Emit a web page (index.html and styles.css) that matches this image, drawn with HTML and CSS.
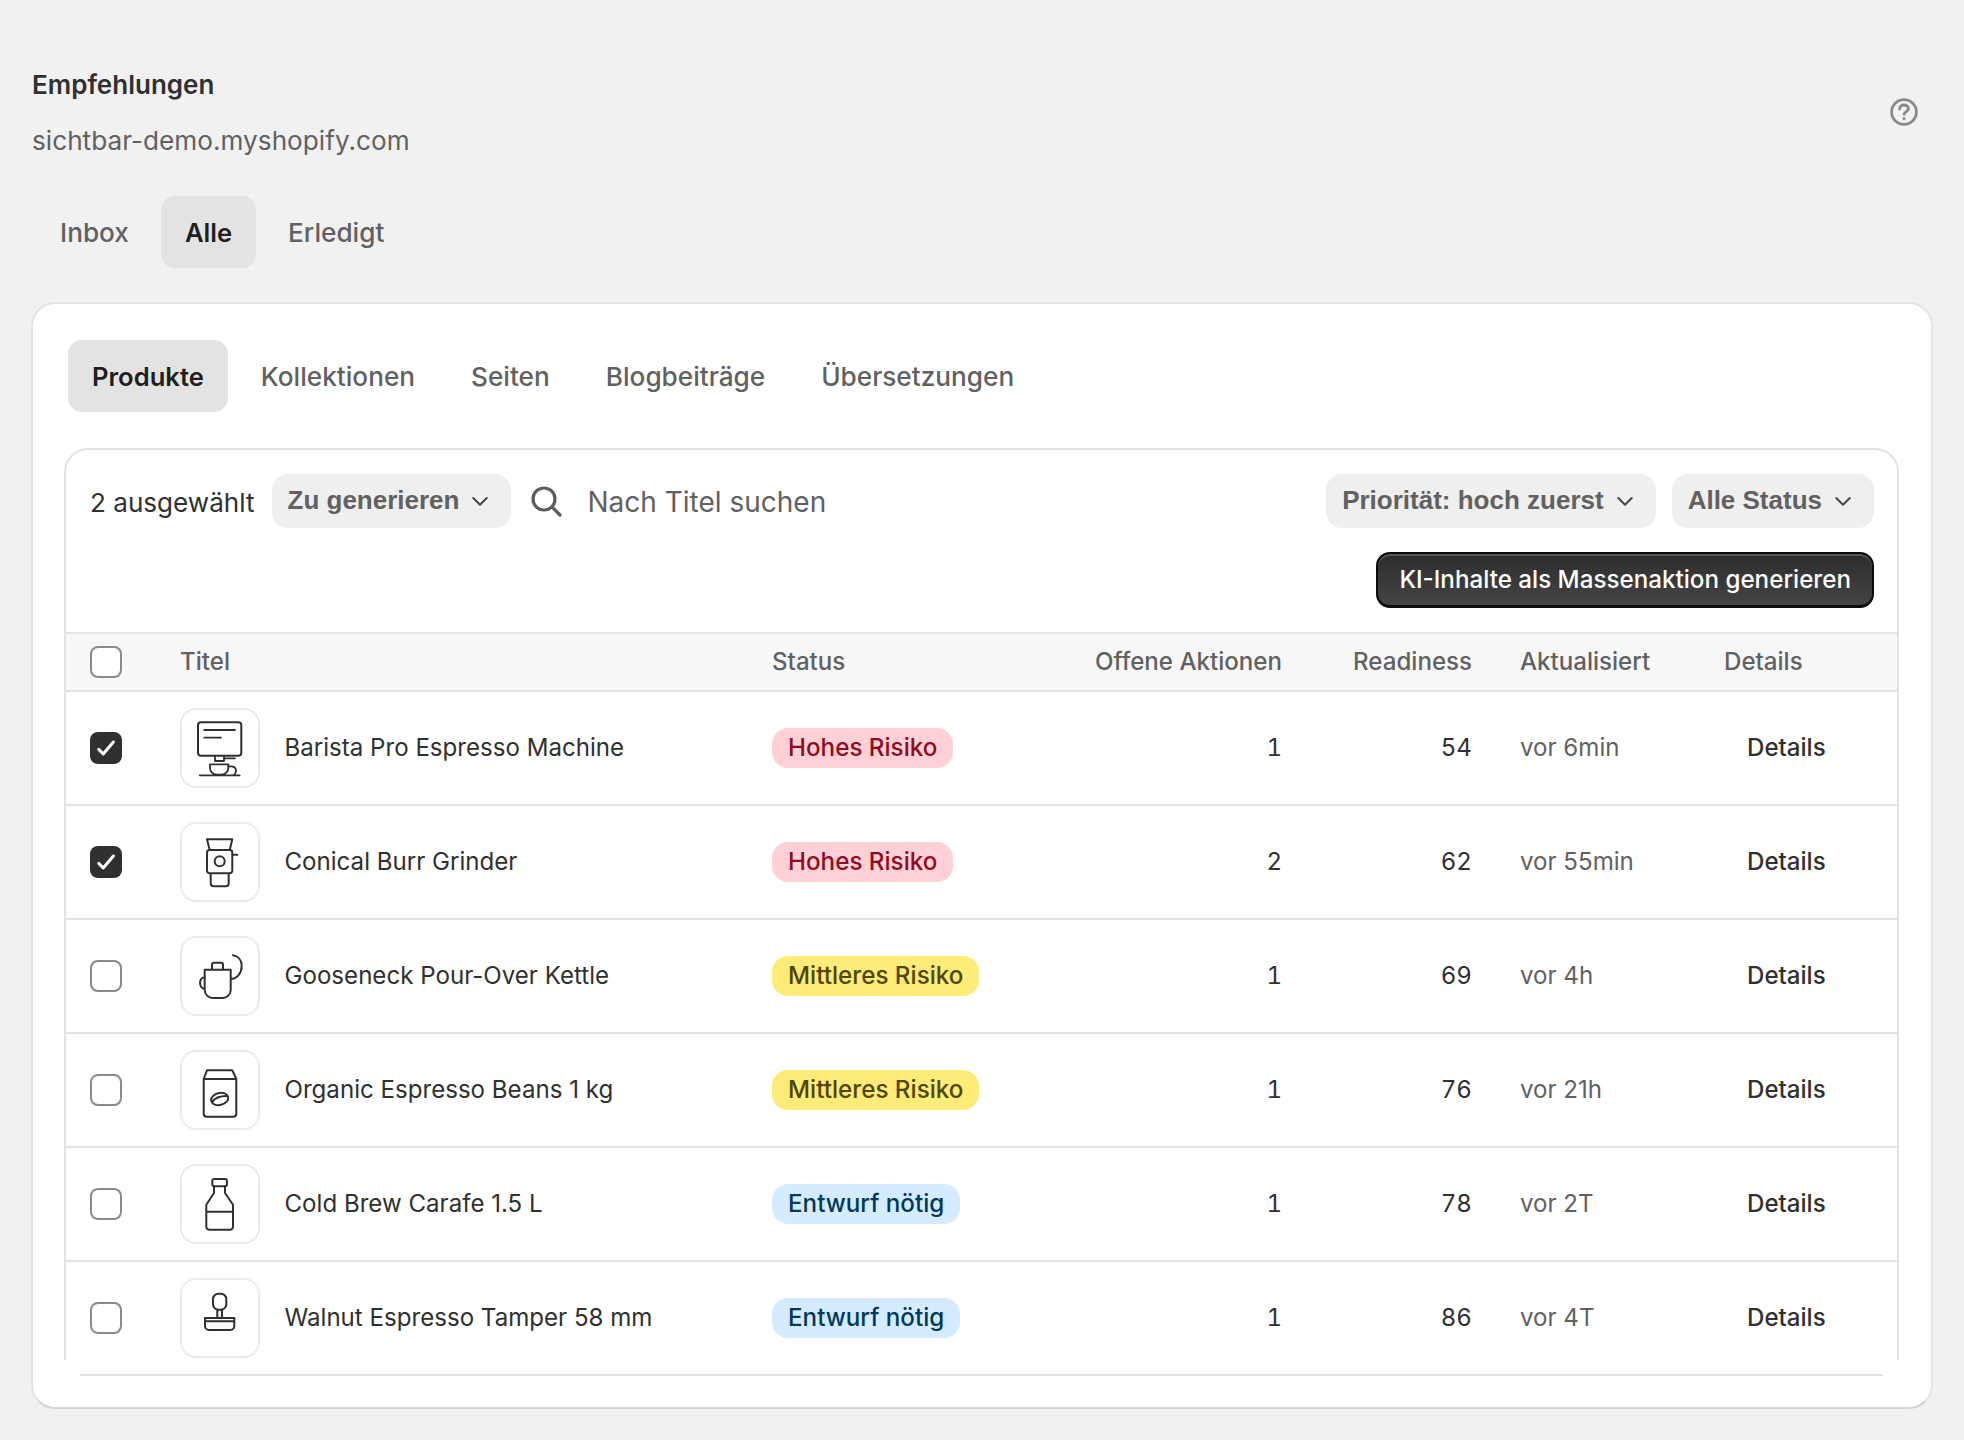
FILE: index.html
```html
<!DOCTYPE html>
<html lang="de">
<head>
<meta charset="utf-8">
<title>Empfehlungen</title>
<link rel="stylesheet" href="styles.css">
</head>
<body>
<main class="page">
  <header class="head">
    <div class="head-text">
      <h1 class="title">Empfehlungen</h1>
      <p class="sub">sichtbar-demo.myshopify.com</p>
    </div>
    <svg class="help" viewBox="0 0 28 28" fill="none" stroke="#8a8a8a" stroke-width="2.8" stroke-linecap="round" stroke-linejoin="round"><circle cx="14" cy="14" r="12.4"/><path d="M9.6 11c0-2.5 2-4 4.4-4s4.4 1.5 4.4 3.8c0 3.1-4.4 2.9-4.4 5.6"/><circle cx="14" cy="20.6" r=".6" fill="#8a8a8a" stroke-width="2"/></svg>
  </header>
  <nav class="tabs outer-tabs">
    <a class="tab">Inbox</a><a class="tab is-active">Alle</a><a class="tab">Erledigt</a>
  </nav>
  <section class="card">
    <nav class="tabs inner-tabs">
      <a class="tab itab is-active">Produkte</a><a class="tab itab">Kollektionen</a><a class="tab itab">Seiten</a><a class="tab itab">Blogbeiträge</a><a class="tab itab">Übersetzungen</a>
    </nav>
    <div class="panel">
      <div class="toolbar">
        <div class="tool-row">
          <span class="count">2 ausgewählt</span>
          <button class="select"><span class="lift">Zu generieren</span><svg class="chev" viewBox="0 0 16 16" fill="none" stroke="#4a4a4a" stroke-width="1.4" stroke-linecap="round" stroke-linejoin="round"><path d="M3.5 6 8 10.5 12.5 6"/></svg></button>
          <svg class="search" viewBox="0 0 32 32" fill="none" stroke="#5c5c5c" stroke-width="3.2" stroke-linecap="round"><circle cx="14" cy="14" r="11"/><path d="M22.2 22.2 30 30"/></svg>
          <span class="placeholder">Nach Titel suchen</span>
          <span class="grow"></span>
          <button class="select"><span class="lift">Priorität: hoch zuerst</span><svg class="chev" viewBox="0 0 16 16" fill="none" stroke="#4a4a4a" stroke-width="1.4" stroke-linecap="round" stroke-linejoin="round"><path d="M3.5 6 8 10.5 12.5 6"/></svg></button>
          <button class="select"><span class="lift">Alle Status</span><svg class="chev" viewBox="0 0 16 16" fill="none" stroke="#4a4a4a" stroke-width="1.4" stroke-linecap="round" stroke-linejoin="round"><path d="M3.5 6 8 10.5 12.5 6"/></svg></button>
        </div>
        <div class="tool-actions"><button class="primary">KI-Inhalte als Massenaktion generieren</button></div>
      </div>
      <div class="grid grid-head">
        <span class="c-check"><span class="box"></span></span>
        <span class="lift">Titel</span>
        <span class="lift">Status</span>
        <span class="num lift">Offene Aktionen</span>
        <span class="num lift">Readiness</span>
        <span class="time-col lift">Aktualisiert</span>
        <span class="lift">Details</span>
      </div>

      <div class="grid row">
        <span class="c-check"><span class="box is-checked"><svg viewBox="0 0 32 32" fill="none" stroke="#fff" stroke-width="3" stroke-linecap="round" stroke-linejoin="round"><path d="M8.8 17.4 13.2 22 23.4 10"/></svg></span></span>
        <span class="product"><span class="thumb"><svg viewBox="2 2 76 76" fill="none" stroke="#303030" stroke-width="1.8" stroke-linecap="round" stroke-linejoin="round"><rect x="18" y="14.3" width="43.3" height="33.4" rx="3" stroke-width="2"/><path d="M24.3 22H55M24.3 29.7H41M35 47.7V53H44V47.7M44 50.3H55M30 56.3H48.3V60A6.7 6.7 0 0 1 41.6 66.7H36.7A6.7 6.7 0 0 1 30 60ZM48 58.3H52A4.7 4.7 0 0 1 56 63C56 65 55 66 54 67M19.7 67.3H59.7"/></svg></span><span class="name lift">Barista Pro Espresso Machine</span></span>
        <span><span class="badge red"><span class="lift">Hohes Risiko</span></span></span>
        <span class="num lift">1</span><span class="num lift">54</span>
        <span class="time-col time lift">vor 6min</span><a class="link lift">Details</a>
      </div>

      <div class="grid row">
        <span class="c-check"><span class="box is-checked"><svg viewBox="0 0 32 32" fill="none" stroke="#fff" stroke-width="3" stroke-linecap="round" stroke-linejoin="round"><path d="M8.8 17.4 13.2 22 23.4 10"/></svg></span></span>
        <span class="product"><span class="thumb"><svg viewBox="2 2 76 76" fill="none" stroke="#303030" stroke-width="2" stroke-linecap="round" stroke-linejoin="round"><path d="M27 17.3H52.3L49.7 28H29.7ZM29.5 28H49.8A2.5 2.5 0 0 1 52.3 30.5V48.8A2.5 2.5 0 0 1 49.8 51.3H29.5A2.5 2.5 0 0 1 27 48.8V30.5A2.5 2.5 0 0 1 29.5 28ZM52.3 32.7H57.3M30.7 51.3H48.7V61.3A3 3 0 0 1 45.7 64.3H33.7A3 3 0 0 1 30.7 61.3Z"/><circle cx="39.7" cy="39.3" r="5"/></svg></span><span class="name lift">Conical Burr Grinder</span></span>
        <span><span class="badge red"><span class="lift">Hohes Risiko</span></span></span>
        <span class="num lift">2</span><span class="num lift">62</span>
        <span class="time-col time lift">vor 55min</span><a class="link lift">Details</a>
      </div>

      <div class="grid row">
        <span class="c-check"><span class="box"></span></span>
        <span class="product"><span class="thumb"><svg viewBox="2 2 76 76" fill="none" stroke="#303030" stroke-width="2" stroke-linecap="round" stroke-linejoin="round"><path d="M24.7 33.7H50.7V54A8 8 0 0 1 42.7 62H32.7A8 8 0 0 1 24.7 54ZM32 33.7V28.7A2 2 0 0 1 34 26.7H41A2 2 0 0 1 43 28.7V33.7M24.7 41C18.5 41.5 18.5 52.5 24.7 52.7M50.7 43C57 43 61.7 37 61.7 30C61.7 24 58 20 53 19.3"/></svg></span><span class="name lift">Gooseneck Pour-Over Kettle</span></span>
        <span><span class="badge yellow"><span class="lift">Mittleres Risiko</span></span></span>
        <span class="num lift">1</span><span class="num lift">69</span>
        <span class="time-col time lift">vor 4h</span><a class="link lift">Details</a>
      </div>

      <div class="grid row">
        <span class="c-check"><span class="box"></span></span>
        <span class="product"><span class="thumb"><svg viewBox="2 2 76 76" fill="none" stroke="#303030" stroke-width="2" stroke-linecap="round" stroke-linejoin="round"><path d="M27 20.3H52.3L56.3 29V63.7A3 3 0 0 1 53.3 66.7H26.7A3 3 0 0 1 23.7 63.7V29ZM23.7 29H56.3"/><ellipse cx="39.7" cy="49" rx="8.7" ry="6" transform="rotate(-14 39.7 49)"/><path d="M32.4 52C35 47.5 40 46 46.4 46"/></svg></span><span class="name lift">Organic Espresso Beans 1 kg</span></span>
        <span><span class="badge yellow"><span class="lift">Mittleres Risiko</span></span></span>
        <span class="num lift">1</span><span class="num lift">76</span>
        <span class="time-col time lift">vor 21h</span><a class="link lift">Details</a>
      </div>

      <div class="grid row">
        <span class="c-check"><span class="box"></span></span>
        <span class="product"><span class="thumb"><svg viewBox="2 2 76 76" fill="none" stroke="#303030" stroke-width="2" stroke-linecap="round" stroke-linejoin="round"><rect x="32.3" y="15" width="14.7" height="7.3" rx="2"/><path d="M34 22.3V29L26.3 40.7V62.7A3 3 0 0 0 29.3 65.7H50A3 3 0 0 0 53 62.7V40.7L45 29V22.3M26.3 47.7H53"/></svg></span><span class="name lift">Cold Brew Carafe 1.5 L</span></span>
        <span><span class="badge blue"><span class="lift">Entwurf nötig</span></span></span>
        <span class="num lift">1</span><span class="num lift">78</span>
        <span class="time-col time lift">vor 2T</span><a class="link lift">Details</a>
      </div>

      <div class="grid row row-last">
        <span class="c-check"><span class="box"></span></span>
        <span class="product"><span class="thumb"><svg viewBox="2 2 76 76" fill="none" stroke="#303030" stroke-width="2" stroke-linecap="round" stroke-linejoin="round"><rect x="33" y="15.7" width="13.3" height="16" rx="5.5"/><path d="M37.3 31.7V40M42 31.7V40M25 40H54.3V48A4 4 0 0 1 50.3 52H29A4 4 0 0 1 25 48ZM25 43.3H54.3"/></svg></span><span class="name lift">Walnut Espresso Tamper 58 mm</span></span>
        <span><span class="badge blue"><span class="lift">Entwurf nötig</span></span></span>
        <span class="num lift">1</span><span class="num lift">86</span>
        <span class="time-col time lift">vor 4T</span><a class="link lift">Details</a>
      </div>
    </div>
    <div class="panel-end"></div>
  </section>
</main>
</body>
</html>
```

FILE: styles.css
```css
* { box-sizing: border-box; }
html, body { margin: 0; }
body {
  width: 1964px;
  height: 1440px;
  overflow: hidden;
  background: #f1f1f1;
  color: #303030;
  font-family: Inter, "Liberation Sans", sans-serif;
  font-size: 24.1px;
}
.page { padding: 64px 31px 0 31px; }
.head { display: flex; justify-content: space-between; align-items: center; padding: 0 15px 0 1px; }
.title { margin: 0; font-size: 26px; line-height: 42px; font-weight: 600; color: #303030; }
.sub { margin: 14px 0 0; font-size: 26.2px; line-height: 42px; color: #616161; }
.help { width: 28px; height: 28px; margin-bottom: 2px; }

.tabs { display: flex; }
.outer-tabs { margin-top: 34px; padding-left: 4px; gap: 7px; }
.tab {
  display: flex; align-items: center; height: 72px;
  padding: 0 25px; border-radius: 14px;
  font-size: 26.2px; font-weight: 500; color: #616161;
}
.tab.is-active { background: #e3e3e3; color: #1f1f1f; font-weight: 600; font-size: 25.6px; }
.outer-tabs .tab.is-active { padding: 0 24px; }
.inner-tabs { margin: 36px 0 0 35px; gap: 8px; }
.inner-tabs .tab { padding: 0 24px; }
.inner-tabs .tab.is-active { margin-right: 1px; }

.card {
  margin-top: 34px;
  height: 1107px;
  background: #fff;
  border: 2px solid #e3e3e3;
  border-bottom-color: #d4d4d4;
  border-radius: 24px;
}
.panel {
  margin: 36px 32px 0 31px;
  border: 2px solid #e3e3e3;
  border-bottom: 0;
  border-radius: 24px 24px 0 0;
  height: 912px;
}
.toolbar { height: 182px; padding: 24px 23px 0 24px; }
.tool-row { display: flex; align-items: center; height: 54px; }
.count { font-size: 26.1px; color: #303030; margin-right: 17px; padding-top: 2px; }
.select {
  display: flex; align-items: center; height: 54px; padding: 0 19px 0 16px;
  border: 0; border-radius: 16px; background: #efefef;
  font: 700 26px "Liberation Sans", Arial, sans-serif; color: #616161;
}
.chev { width: 24px; height: 24px; margin-left: 9px; }
.select + .select { margin-left: 16px; }
.search { width: 32px; height: 32px; margin-left: 19px; }
.placeholder { margin-left: 25px; padding-top: 2px; font-size: 28px; color: #616161; }
.grow { flex: 1; }
.tool-actions { display: flex; justify-content: flex-end; margin-top: 24px; }
.primary {
  height: 56px; padding: 0 21px; border-radius: 14px;
  border: 2px solid #0c0c0c; border-bottom-width: 3px;
  background: linear-gradient(#2c2c2c, #454545); color: #fff;
  box-shadow: inset 0 2px 0 #565656;
  font: 500 24.2px Inter, "Liberation Sans", sans-serif;
}

.grid {
  display: grid;
  grid-template-columns: 90px 592px 300px 210px 190px 252px 1fr;
  align-items: center;
  padding-left: 24px;
}
.grid-head {
  height: 60px; background: #f7f7f7;
  border-top: 2px solid #e3e3e3; border-bottom: 2px solid #e3e3e3;
  font-weight: 500; color: #616161;
}
.lift { padding-bottom: 2px; }
.row { height: 114px; border-bottom: 2px solid #e3e3e3; }
.row-last { border-bottom: 0; height: 112px; }
.panel-end { height: 2px; margin: 14px 48px 0 47px; background: #e3e3e3; }
.num { text-align: right; font-variant-numeric: tabular-nums; }
.time-col { padding-left: 48px; }
.time { color: #616161; }
.link { font-weight: 550; padding-left: 23px; }

.c-check { display: flex; }
.box {
  display: flex; width: 32px; height: 32px;
  border: 2px solid #8a8a8a; border-radius: 8px; background: #fff;
}
.box.is-checked { background: #303030; border: 0; }
.box svg { width: 100%; height: 100%; }

.product { display: flex; align-items: center; gap: 24.5px; }
.thumb {
  display: flex; flex: none;
  width: 80px; height: 80px; border: 2px solid #ebebeb; border-radius: 16px;
}
.thumb svg { width: 76px; height: 76px; }
.name { color: #303030; }

.badge {
  display: inline-flex; align-items: center; height: 40px; padding: 0 16px;
  border-radius: 16px; font-size: 24.2px; font-weight: 500; white-space: nowrap;
}
.red { background: #ffd1d6; color: #8e0b21; }
.yellow { background: #ffeb78; color: #4f4700; }
.blue { background: #d5ebff; color: #003a5a; }
```
